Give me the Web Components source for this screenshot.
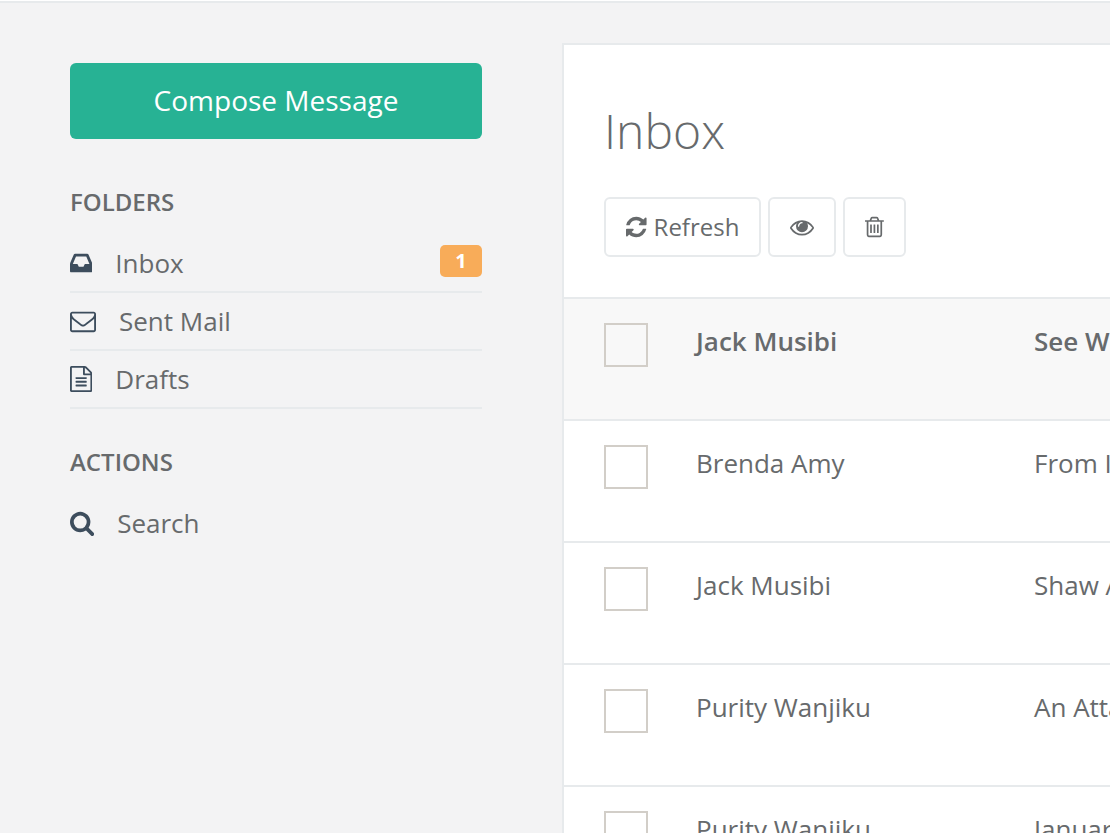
<!DOCTYPE html>
<html lang="en">
<head>
<meta charset="utf-8">
<meta name="viewport" content="width=device-width, initial-scale=1">
<title>Inbox</title>
<style>
  body {
    margin: 0;
    background: #f3f3f4;
    color: #676a6c;
    font-family: "Open Sans", "Liberation Sans", sans-serif;
    font-size: 26px;
    line-height: 36px;
    height: 100vh;
    overflow: hidden;
    --line: #e7eaec;
    --dark: #3d4d5d;
  }
</style>
</head>
<body>
  <mail-page>
    <mail-sidebar slot="sidebar">
      <side-group heading="Folders" lined>
        <side-link icon="inbox" badge="1">Inbox</side-link>
        <side-link icon="envelope">Sent Mail</side-link>
        <side-link icon="file">Drafts</side-link>
      </side-group>
      <side-group heading="Actions">
        <side-link icon="search">Search</side-link>
      </side-group>
    </mail-sidebar>
    <mail-box heading="Inbox">
      <tool-button slot="tools" icon="refresh">Refresh</tool-button>
      <tool-button slot="tools" icon="eye" label="Mark as read"></tool-button>
      <tool-button slot="tools" icon="trash" label="Move to trash"></tool-button>
      <mail-list></mail-list>
    </mail-box>
  </mail-page>

<script>
  // viewBox and path of each icon, all on the same 1792 unit em
  const ICONS = {
    inbox: ["128 0 1536 1792", "M1151 960h316q-1-3-2.5-8t-2.5-8l-212-496h-708l-212 496q-1 2-2.5 8t-2.5 8h316l95 192h320zm513 30v482q0 26-19 45t-45 19h-1408q-26 0-45-19t-19-45v-482q0-62 25-123l238-552q10-25 36.5-42t52.5-17h832q26 0 52.5 17t36.5 42l238 552q25 61 25 123z"],
    envelope: ["0 0 1792 1792", "M1664 1504v-768q-32 36-69 66-268 206-426 338-51 43-83 67t-86.5 48.5-102.5 24.5h-2q-48 0-102.5-24.5t-86.5-48.5-83-67q-158-132-426-338-37-30-69-66v768q0 13 9.5 22.5t22.5 9.5h1472q13 0 22.5-9.5t9.5-22.5zm0-1051v-24.5l-.5-13-3-12.5-5.5-9-9-7.5-14-2.5h-1472q-13 0-22.5 9.5t-9.5 22.5q0 168 147 284 193 152 401 317 6 5 35 29.5t46 37.5 44.5 31.5 50.5 27.5 43 9h2q20 0 43-9t50.5-27.5 44.5-31.5 46-37.5 35-29.5q208-165 401-317 54-43 100.5-115.5t46.5-131.5zm128-37v1088q0 66-47 113t-113 47h-1472q-66 0-113-47t-47-113v-1088q0-66 47-113t113-47h1472q66 0 113 47t47 113z"],
    file: ["128 0 1536 1792", "M1596 380q28 28 48 76t20 88v1152q0 40-28 68t-68 28h-1344q-40 0-68-28t-28-68v-1600q0-40 28-68t68-28h896q40 0 88 20t76 48zm-444-244v376h376q-10-29-22-41l-313-313q-12-12-41-22zm384 1528v-1024h-416q-40 0-68-28t-28-68v-416h-768v1536h1280zm-1024-864q0-14 9-23t23-9h704q14 0 23 9t9 23v64q0 14-9 23t-23 9h-704q-14 0-23-9t-9-23v-64zm736 224q14 0 23 9t9 23v64q0 14-9 23t-23 9h-704q-14 0-23-9t-9-23v-64q0-14 9-23t23-9h704zm0 256q14 0 23 9t9 23v64q0 14-9 23t-23 9h-704q-14 0-23-9t-9-23v-64q0-14 9-23t23-9h704z"],
    search: ["64 0 1664 1792", "M1216 832q0-185-131.5-316.5t-316.5-131.5-316.5 131.5-131.5 316.5 131.5 316.5 316.5 131.5 316.5-131.5 131.5-316.5zm512 832q0 52-38 90t-90 38q-54 0-90-38l-343-342q-179 124-399 124-143 0-273.5-55.5t-225-150-150-225-55.5-273.5 55.5-273.5 150-225 225-150 273.5-55.5 273.5 55.5 225 150 150 225 55.5 273.5q0 220-124 399l343 343q37 37 37 90z"],
    refresh: ["128 0 1536 1792", "M1639 1056q0 5-1 7-64 268-268 434.5t-478 166.5q-146 0-282.5-55t-243.5-157l-129 129q-19 19-45 19t-45-19-19-45v-448q0-26 19-45t45-19h448q26 0 45 19t19 45-19 45l-137 137q71 66 161 102t187 36q134 0 250-65t186-179q11-17 53-117 8-23 30-23h192q13 0 22.5 9.5t9.5 22.5zm25-800v448q0 26-19 45t-45 19h-448q-26 0-45-19t-19-45 19-45l138-138q-148-137-349-137-134 0-250 65t-186 179q-11 17-53 117-8 23-30 23h-199q-13 0-22.5-9.5t-9.5-22.5v-7q65-268 270-434.5t480-166.5q146 0 284 55.5t245 156.5l130-129q19-19 45-19t45 19 19 45z"],
    eye: ["0 0 1792 1792", "M1664 960q-152-236-381-353 61 104 61 225 0 185-131.5 316.5t-316.5 131.5-316.5-131.5-131.5-316.5q0-121 61-225-229 117-381 353 133 205 333.5 326.5t434.5 121.5 434.5-121.5 333.5-326.5zm-720-384q0-20-14-34t-34-14q-125 0-214.5 89.5t-89.5 214.5q0 20 14 34t34 14 34-14 14-34q0-86 61-147t147-61q20 0 34-14t14-34zm848 384q0 34-20 69-140 230-376.5 368.5t-499.5 138.5-499.5-139-376.5-368q-20-35-20-69t20-69q140-229 376.5-368t499.5-139 499.5 139 376.5 368q20 35 20 69z"],
    trash: ["192 0 1408 1792", "M704 736v576q0 14-9 23t-23 9h-64q-14 0-23-9t-9-23v-576q0-14 9-23t23-9h64q14 0 23 9t9 23zm256 0v576q0 14-9 23t-23 9h-64q-14 0-23-9t-9-23v-576q0-14 9-23t23-9h64q14 0 23 9t9 23zm256 0v576q0 14-9 23t-23 9h-64q-14 0-23-9t-9-23v-576q0-14 9-23t23-9h64q14 0 23 9t9 23zm128 724v-948h-896v948q0 22 7 40.5t14.5 27 10.5 8.5h832q3 0 10.5-8.5t14.5-27 7-40.5zm-672-1076h448l-48-117q-7-9-17-11h-317q-10 2-17 11zm928 32v64q0 14-9 23t-23 9h-96v948q0 83-47 143.5t-113 60.5h-832q-66 0-113-58.5t-47-141.5v-952h-96q-14 0-23-9t-9-23v-64q0-14 9-23t23-9h309l70-167q15-37 54-63t79-26h320q40 0 79 26t54 63l70 167h309q14 0 23 9t9 23z"]
  };

  class MailIcon extends HTMLElement {
    constructor() {
      super();
      this.attachShadow({ mode: "open" });
    }

    connectedCallback() {
      const [viewBox, path] = ICONS[this.getAttribute("name")];
      this.shadowRoot.innerHTML = `
      <style>
        :host { display: block; flex: none; height: 26px; }
        :host([small]) { height: 24px; }
        svg { display: block; height: 100%; fill: currentColor; }
      </style>
      <svg viewBox="${viewBox}" aria-hidden="true"><path d="${path}"/></svg>
    `;
    }
  }

  class MailPage extends HTMLElement {
    constructor() {
      super();
      this.attachShadow({ mode: "open" });
      this.shadowRoot.innerHTML = `
      <style>
        :host { display: block; }
        header { height: 1px; background: #fff; border-bottom: 2px solid var(--line); }
        main {
          display: grid;
          grid-template-columns: 412px minmax(0, 1fr);
          column-gap: 80px;
          padding: 40px 0 0 70px;
        }
      </style>
      <header></header>
      <main>
        <slot name="sidebar"></slot>
        <slot></slot>
      </main>
    `;
    }
  }

  class MailSidebar extends HTMLElement {
    constructor() {
      super();
      this.attachShadow({ mode: "open" });
      this.shadowRoot.innerHTML = `
      <style>
        :host { display: block; padding-top: 20px; }
        button {
          display: block;
          width: 100%;
          height: 76px;
          padding: 0 0 2px;
          border: 0;
          border-radius: 6px;
          background: #27b294;
          color: #fff;
          font: inherit;
          font-size: 28px;
        }
      </style>
      <button type="button">Compose Message</button>
      <slot></slot>
    `;
    }
  }

  class SideGroup extends HTMLElement {
    constructor() {
      super();
      this.attachShadow({ mode: "open" });
    }

    connectedCallback() {
      this.shadowRoot.innerHTML = `
      <style>
        :host { display: block; padding-top: 35px; }
        :host([lined]) { padding-top: 45px; }
        h5 {
          margin: 0 0 15px;
          font-size: 24px;
          font-weight: 600;
          text-transform: uppercase;
        }
        :host([lined]) ::slotted(side-link) { border-bottom: 2px solid var(--line); }
      </style>
      <h5>${this.getAttribute("heading")}</h5>
      <nav aria-label="${this.getAttribute("heading")}"><slot></slot></nav>
    `;
    }
  }

  class SideLink extends HTMLElement {
    constructor() {
      super();
      this.attachShadow({ mode: "open" });
    }

    connectedCallback() {
      const badge = this.getAttribute("badge");
      this.shadowRoot.innerHTML = `
      <style>
        :host { display: block; }
        a {
          display: flex;
          align-items: center;
          height: 56px;
          color: inherit;
          text-decoration: none;
        }
        mail-icon { margin-right: 23px; color: var(--dark); }
        .badge {
          margin-left: auto;
          margin-bottom: 4px;
          width: 42px;
          border-radius: 5px;
          background: #f8ac59;
          color: #fff;
          font-size: 20px;
          font-weight: 700;
          line-height: 32px;
          text-align: center;
        }
      </style>
      <a href="#">
        <mail-icon name="${this.getAttribute("icon")}"></mail-icon>
        <slot></slot>
        ${badge ? `<span class="badge">${badge}</span>` : ""}
      </a>
    `;
    }
  }

  class ToolButton extends HTMLElement {
    constructor() {
      super();
      this.attachShadow({ mode: "open" });
    }

    connectedCallback() {
      const label = this.getAttribute("label");
      this.shadowRoot.innerHTML = `
      <style>
        :host { display: block; }
        button {
          display: flex;
          align-items: center;
          gap: 7px;
          height: 60px;
          padding: 0 20px;
          border: 2px solid var(--line);
          border-radius: 6px;
          background: #fff;
          color: inherit;
          font: inherit;
          font-size: 24px;
        }
      </style>
      <button type="button" ${label ? `aria-label="${label}"` : ""}>
        <mail-icon name="${this.getAttribute("icon")}" small></mail-icon>
        ${label ? "" : "<slot></slot>"}
      </button>
    `;
    }
  }

  class MailBox extends HTMLElement {
    constructor() {
      super();
      this.attachShadow({ mode: "open" });
    }

    connectedCallback() {
      this.shadowRoot.innerHTML = `
      <style>
        :host {
          display: block;
          border: solid var(--line);
          border-width: 2px 0 0 2px;
          background: #fff;
        }
        .head { padding: 51px 40px 40px; }
        h2 { margin: 0 0 31px; font-size: 48px; font-weight: 300; line-height: 70px; }
        .tools { display: flex; gap: 7px; }
      </style>
      <div class="head">
        <h2>${this.getAttribute("heading")}</h2>
        <div class="tools"><slot name="tools"></slot></div>
      </div>
      <slot></slot>
    `;
    }
  }

  const MAILS = [
    { from: "Jack Musibi", subject: "See W", unread: true },
    { from: "Brenda Amy", subject: "From I" },
    { from: "Jack Musibi", subject: "Shaw A" },
    { from: "Purity Wanjiku", subject: "An Atta" },
    { from: "Purity Wanjiku", subject: "Januar" }
  ];

  class MailList extends HTMLElement {
    constructor() {
      super();
      this.attachShadow({ mode: "open" });

      const rows = MAILS.map((mail, i) => `
        <tr class="${mail.unread ? "unread" : ""}">
          <td class="check"><input type="checkbox" aria-labelledby="from${i}"></td>
          <td class="from" id="from${i}">${mail.from}</td>
          <td>${mail.subject}</td>
        </tr>`).join("");

      this.shadowRoot.innerHTML = `
      <style>
        :host { display: block; overflow: hidden; }
        table { width: 100%; table-layout: fixed; border-collapse: separate; border-spacing: 0; }
        td {
          height: 120px;
          box-sizing: content-box;
          padding: 0;
          border-top: 2px solid var(--line);
          vertical-align: top;
          line-height: 84px;
          white-space: nowrap;
        }
        .check { width: 92px; padding-left: 40px; }
        .from { width: 338px; }
        .unread { background: #f8f8f8; font-weight: 600; }
        input {
          display: block;
          appearance: none;
          width: 44px;
          height: 44px;
          margin: 24px 0 0;
          border: 2px solid #d2cec8;
        }
      </style>
      <table><tbody>${rows}</tbody></table>
    `;
    }
  }

  customElements.define("mail-icon", MailIcon);
  customElements.define("mail-page", MailPage);
  customElements.define("mail-sidebar", MailSidebar);
  customElements.define("side-group", SideGroup);
  customElements.define("side-link", SideLink);
  customElements.define("tool-button", ToolButton);
  customElements.define("mail-box", MailBox);
  customElements.define("mail-list", MailList);
</script>
</body>
</html>
